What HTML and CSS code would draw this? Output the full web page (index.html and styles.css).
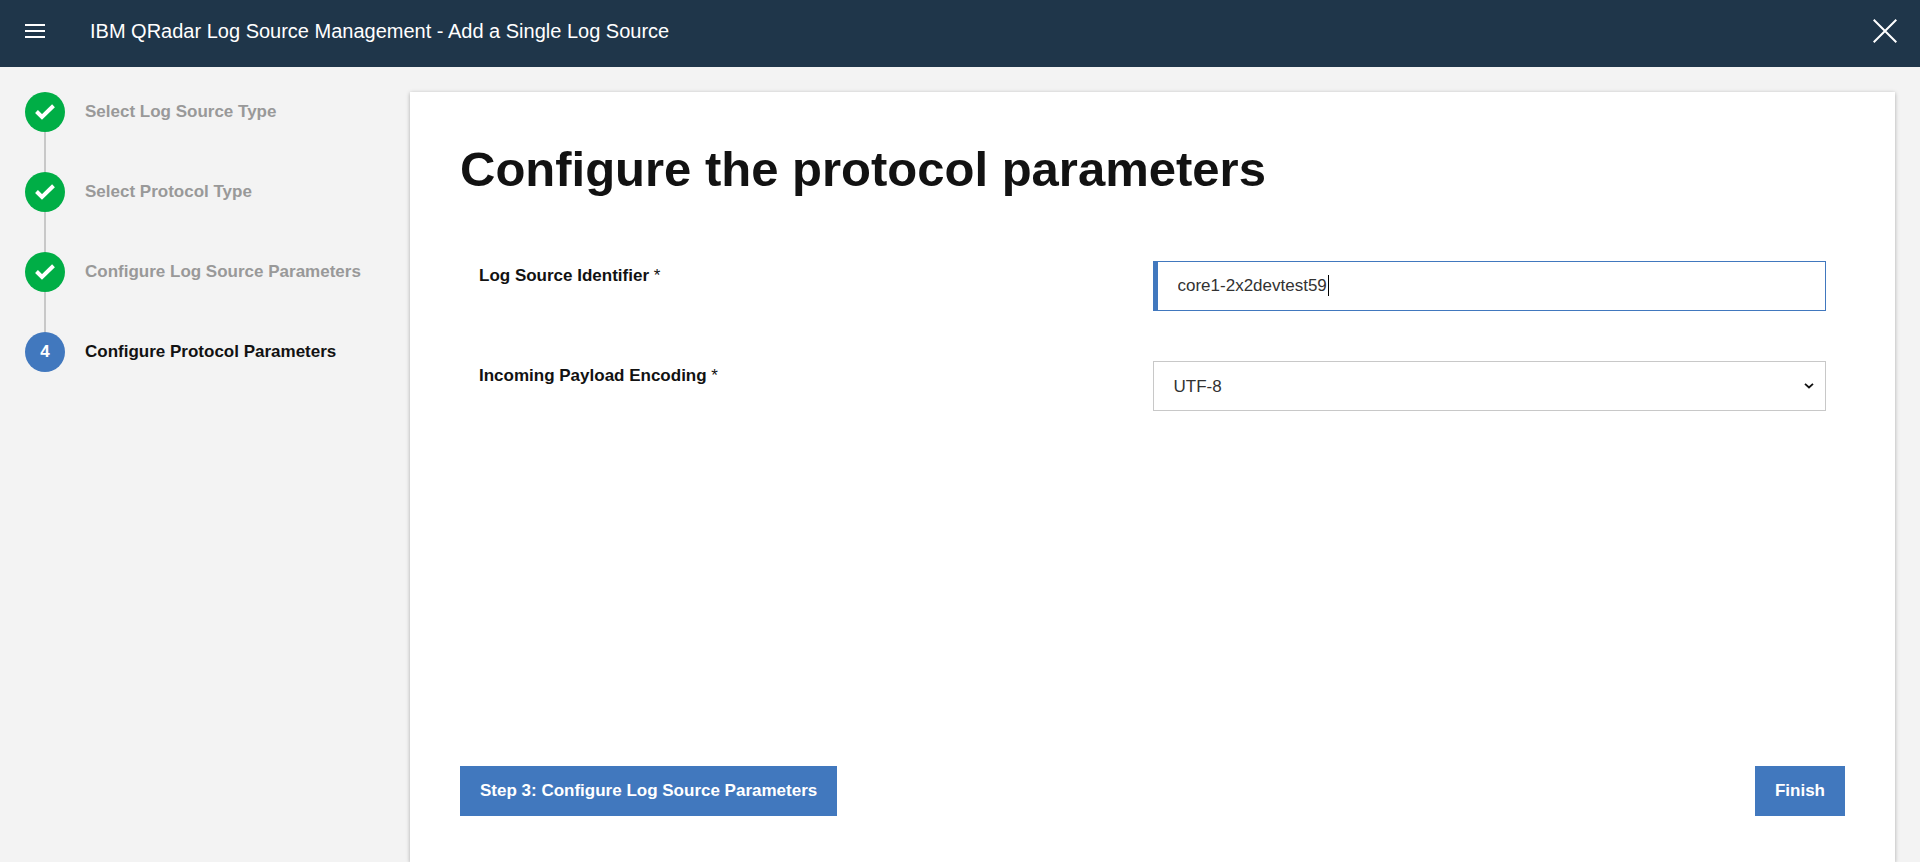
FILE: index.html
```html
<!DOCTYPE html>
<html lang="en">
<head>
    <meta charset="utf-8">
    <title>IBM QRadar Log Source Management</title>
    <link rel="stylesheet" href="styles.css">
</head>
<body>
    <header class="header">
        <button type="button" class="icon-button" aria-label="Menu">
            <svg width="20" height="14" viewBox="0 0 20 14" shape-rendering="crispEdges"><path d="M0 0h20v2H0zM0 6h20v2H0zM0 12h20v2H0z" fill="#fff"/></svg>
        </button>
        <span class="header-title">IBM QRadar Log Source Management - Add a Single Log Source</span>
        <button type="button" class="icon-button close-button" aria-label="Close">
            <svg width="24" height="24" viewBox="0 0 24 24"><path d="M.7.7l22.6 22.6M23.3.7L.7 23.3" stroke="#fff" stroke-width="2" fill="none"/></svg>
        </button>
    </header>

    <div class="layout">
        <nav class="sidebar">
            <ol class="steps">
                <li class="step done">
                    <span class="step-icon"><svg width="20" height="16" viewBox="0 0 20 16"><path d="M1.500 7.500L7 13 18.500 1.800" stroke="#fff" stroke-width="4" fill="none"/></svg></span>
                    <span>Select Log Source Type</span>
                </li>
                <li class="step done">
                    <span class="step-icon"><svg width="20" height="16" viewBox="0 0 20 16"><path d="M1.500 7.500L7 13 18.500 1.800" stroke="#fff" stroke-width="4" fill="none"/></svg></span>
                    <span>Select Protocol Type</span>
                </li>
                <li class="step done">
                    <span class="step-icon"><svg width="20" height="16" viewBox="0 0 20 16"><path d="M1.500 7.500L7 13 18.500 1.800" stroke="#fff" stroke-width="4" fill="none"/></svg></span>
                    <span>Configure Log Source Parameters</span>
                </li>
                <li class="step current">
                    <span class="step-icon">4</span>
                    <span>Configure Protocol Parameters</span>
                </li>
            </ol>
        </nav>

        <main class="card">
            <h1>Configure the protocol parameters</h1>
            <form class="form">
                <div class="form-row">
                    <label for="identifier">Log Source Identifier <span class="required">*</span></label>
                    <div class="field">
                        <input type="text" id="identifier" class="control active" value="core1-2x2devtest59">
                        <span class="caret"></span>
                    </div>
                </div>
                <div class="form-row">
                    <label for="encoding">Incoming Payload Encoding <span class="required">*</span></label>
                    <div class="field">
                        <select id="encoding" class="control">
                            <option>UTF-8</option>
                        </select>
                        <svg class="chevron" width="10" height="6" viewBox="0 0 10 6"><path d="M1 .8l4 3.700 4-3.700" stroke="#121212" stroke-width="1.800" fill="none"/></svg>
                    </div>
                </div>
            </form>
            <div class="actions">
                <button type="button" class="button">Step 3: Configure Log Source Parameters</button>
                <button type="button" class="button">Finish</button>
            </div>
        </main>
    </div>
</body>
</html>
```
FILE: styles.css
```css
* {
    box-sizing: border-box;
}
body {
    font-family: "Liberation Sans", Arial, sans-serif;
    font-size: 17px;
    color: #121212;
    background-color: #f3f3f3;
    margin: 0;
    height: 100vh;
    display: flex;
    flex-direction: column;
    overflow: hidden;
}
.header {
    background-color: #1f364a;
    color: #fff;
    height: 67px;
    padding: 0 23px 5px 25px;
    display: flex;
    align-items: center;
    flex-shrink: 0;
}
.header-title {
    font-size: 20px;
    line-height: 26px;
    margin-left: 45px;
}
.icon-button {
    background: none;
    border: none;
    padding: 0;
    display: flex;
    cursor: pointer;
}
.close-button {
    margin-left: auto;
}
.layout {
    flex: 1;
    display: flex;
    padding: 25px 25px 0;
}
.sidebar {
    width: 385px;
    flex-shrink: 0;
}
.steps {
    list-style: none;
    margin: 0;
    padding: 0;
    display: flex;
    flex-direction: column;
    gap: 40px;
}
.step {
    position: relative;
    display: flex;
    align-items: center;
    gap: 20px;
    font-weight: bold;
}
.step-icon {
    width: 40px;
    height: 40px;
    border-radius: 50%;
    background-color: #00ae46;
    color: #fff;
    display: flex;
    justify-content: center;
    align-items: center;
}
.step.done {
    color: #999;
}
/* line to the next step */
.step.done::after {
    content: "";
    position: absolute;
    left: 19px;
    top: 100%;
    width: 2px;
    height: 40px;
    background-color: #c8c8c8;
}
.step.current .step-icon {
    background-color: #4178be;
}
.card {
    flex: 1;
    background-color: #fff;
    box-shadow: 0 1px 4px rgba(0, 0, 0, 0.3);
    padding: 50px 50px 46px;
    display: flex;
    flex-direction: column;
}
h1 {
    font-size: 49px;
    line-height: 54px;
    margin: 0;
}
.form {
    padding: 65px 19px 0;
    display: flex;
    flex-direction: column;
    gap: 50px;
}
.form-row {
    display: grid;
    grid-template-columns: 1fr 1fr;
}
.form-row label {
    font-weight: bold;
    line-height: 30px;
}
.required {
    font-weight: normal;
}
.field {
    position: relative;
}
.control {
    display: block;
    width: 100%;
    height: 50px;
    padding: 0 20px;
    border: 1px solid #c8c8c8;
    border-radius: 0;
    background-color: #fff;
    color: #323232;
    font-family: inherit;
    font-size: 17px;
    appearance: none;
    outline: none;
}
.control.active {
    border-color: #4178be;
    border-left-width: 5px;
}
.caret {
    position: absolute;
    left: 175px;
    top: 14px;
    width: 1px;
    height: 21px;
    background-color: #000;
}
.chevron {
    position: absolute;
    right: 12px;
    top: 22px;
    pointer-events: none;
}
.actions {
    margin-top: auto;
    display: flex;
    justify-content: space-between;
}
.button {
    background-color: #4178be;
    color: #fff;
    height: 50px;
    padding: 0 20px;
    border: none;
    font-family: inherit;
    font-size: 17px;
    font-weight: bold;
    cursor: pointer;
}
```
